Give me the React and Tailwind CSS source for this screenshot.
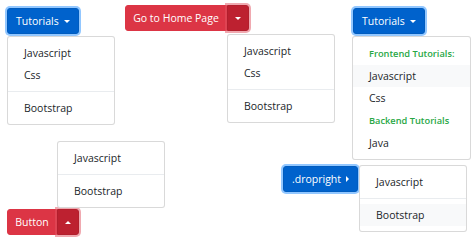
import React from 'react';

const font = { fontFamily: "'Open Sans', 'Liberation Sans', sans-serif" };

const Caret = ({ dir = 'down' }) => {
    if (dir === 'up') {
        return <span className="inline-block w-0 h-0 border-x-[3.5px] border-x-transparent border-b-[3.5px] border-b-white align-middle" />;
    }
    if (dir === 'right') {
        return <span className="inline-block w-0 h-0 border-y-[3.5px] border-y-transparent border-l-[3.5px] border-l-white align-middle" />;
    }
    return <span className="inline-block w-0 h-0 border-x-[3.5px] border-x-transparent border-t-[3.5px] border-t-white align-middle" />;
};

const Item = ({ children, active }) => (
    <div className={`px-4 py-[3px] leading-4 text-[10.5px] text-[#212529] whitespace-nowrap ${active ? 'bg-[#f8f9fa]' : ''}`}>
        {children}
    </div>
);

const Header = ({ children }) => (
    <div className="px-4 py-[5px] leading-[13px] text-[9.25px] font-semibold text-[#28a745] whitespace-nowrap">
        {children}
    </div>
);

const Divider = () => <div className="my-[5px] h-px bg-[#e9ecef]" />;

const Menu = ({ className, children }) => (
    <div className={`absolute z-10 min-w-[108px] py-[5px] bg-white border border-black/15 rounded-[3px] ${className}`}>
        {children}
    </div>
);

const BlueButton = ({ children }) => (
    <button className="flex items-center gap-[5px] px-2 py-1 leading-4 text-[10.5px] text-white bg-[#0062cc] border border-[#005cbf] rounded-[3px] shadow-[0_0_0_2px_rgba(38,143,255,0.5)]">
        {children}
    </button>
);

export default function App() {
    return (
        <div className="w-[474px] h-[245px] bg-white flex flex-col justify-between" style={font}>
            {/* top row */}
            <div className="flex items-start pl-[7px]">
                <div className="w-[118px] pt-[7px]">
                    <div className="relative inline-block">
                        <BlueButton>Tutorials <Caret /></BlueButton>
                        <Menu className="top-full left-0 mt-[2px]">
                            <Item>Javascript</Item>
                            <Item>Css</Item>
                            <Divider />
                            <Item>Bootstrap</Item>
                        </Menu>
                    </div>
                </div>

                <div className="w-[228px] pt-[4px]">
                    <div className="relative inline-flex">
                        <button className="w-[102px] py-1 leading-4 text-[10.5px] text-white bg-[#dc3545] border border-[#dc3545] rounded-l-[3px]">
                            Go to Home Page
                        </button>
                        <button className="flex items-center px-[7px] text-white bg-[#bd2130] border border-[#b21f2d] rounded-r-[3px] shadow-[0_0_0_2px_rgba(225,83,97,0.5)]">
                            <Caret />
                        </button>
                        <Menu className="top-full left-[102px] mt-[3px]">
                            <Item>Javascript</Item>
                            <Item>Css</Item>
                            <Divider />
                            <Item>Bootstrap</Item>
                        </Menu>
                    </div>
                </div>

                <div className="pt-[7px]">
                    <div className="relative inline-block">
                        <BlueButton>Tutorials <Caret /></BlueButton>
                        <Menu className="top-full -left-px mt-[2px]">
                            <Header>Frontend Tutorials:</Header>
                            <Item active>Javascript</Item>
                            <Item>Css</Item>
                            <Header>Backend Tutorials</Header>
                            <Item>Java</Item>
                        </Menu>
                    </div>
                </div>
            </div>

            {/* bottom row */}
            <div className="flex items-end pl-[7px]">
                <div className="w-[276px] pb-[10px]">
                    <div className="relative inline-flex">
                        <button className="w-[50px] py-1 leading-4 text-[10.5px] text-white bg-[#dc3545] border border-[#dc3545] rounded-l-[3px]">
                            Button
                        </button>
                        <button className="flex items-center px-[7px] text-white bg-[#bd2130] border border-[#b21f2d] rounded-r-[3px] shadow-[0_0_0_2px_rgba(225,83,97,0.5)]">
                            <Caret dir="up" />
                        </button>
                        <Menu className="bottom-full left-[50px] mb-[1px]">
                            <Item>Javascript</Item>
                            <Divider />
                            <Item>Bootstrap</Item>
                        </Menu>
                    </div>
                </div>

                <div className="pb-[53px]">
                    <div className="relative inline-block">
                        <BlueButton>.dropright <Caret dir="right" /></BlueButton>
                        <Menu className="top-[-1px] left-full ml-px">
                            <Item>Javascript</Item>
                            <Divider />
                            <Item active>Bootstrap</Item>
                        </Menu>
                    </div>
                </div>
            </div>
        </div>
    );
}
